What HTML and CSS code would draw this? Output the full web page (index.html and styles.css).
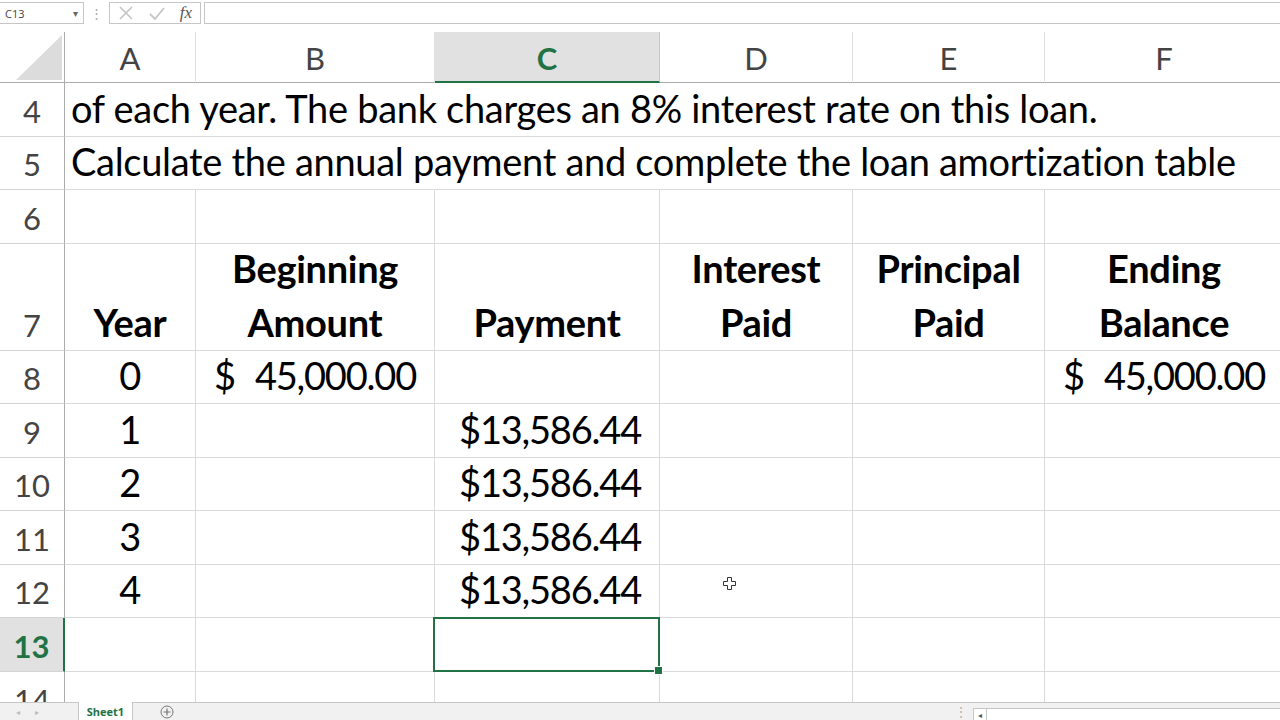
FILE: index.html
```html
<!DOCTYPE html>
<html>
<head>
<meta charset="utf-8">
<link rel="stylesheet" href="styles.css">
</head>
<body>
<div class="app">
  <div class="fbar">
    <div class="namebox"><span class="nb-text">C13</span><span class="nb-arrow">▾</span></div>
    <div class="fdots">⋮</div>
    <div class="fxbox">
      <svg class="ico" width="16" height="16" viewBox="0 0 16 16"><path d="M2 2 L14 14 M14 2 L2 14" stroke="#c4c4c4" stroke-width="1.6" fill="none"/></svg>
      <svg class="ico" width="18" height="16" viewBox="0 0 18 16"><path d="M2 9 L7 14 L16 3" stroke="#c4c4c4" stroke-width="1.8" fill="none"/></svg>
      <span class="fx">fx</span>
    </div>
    <div class="finput"></div>
  </div>

  <div class="sheet">
    <div class="grid">
      <div class="corner"><svg width="46" height="45" viewBox="0 0 46 45"><polygon points="46,0 46,45 0,45" fill="#dcdcdc"/></svg></div>
      <div class="ch">A</div>
      <div class="ch">B</div>
      <div class="ch ch-sel">C</div>
      <div class="ch">D</div>
      <div class="ch">E</div>
      <div class="ch">F</div>

      <div class="rh">4</div>
      <div class="c span">of each year. The bank charges an 8% interest rate on this loan.</div>

      <div class="rh">5</div>
      <div class="c span">Calculate the annual payment and complete the loan amortization table</div>

      <div class="rh">6</div>
      <div class="c"></div><div class="c"></div><div class="c"></div><div class="c"></div><div class="c"></div><div class="c"></div>

      <div class="rh">7</div>
      <div class="c hd">Year</div>
      <div class="c hd">Beginning<br>Amount</div>
      <div class="c hd">Payment</div>
      <div class="c hd">Interest<br>Paid</div>
      <div class="c hd">Principal<br>Paid</div>
      <div class="c hd">Ending<br>Balance</div>

      <div class="rh">8</div>
      <div class="c ctr">0</div>
      <div class="c acct"><span>$</span><span class="amt">45,000.00</span></div>
      <div class="c"></div><div class="c"></div><div class="c"></div>
      <div class="c acct"><span>$</span><span class="amt">45,000.00</span></div>

      <div class="rh">9</div>
      <div class="c ctr">1</div>
      <div class="c"></div>
      <div class="c num">$13,586.44</div>
      <div class="c"></div><div class="c"></div><div class="c"></div>

      <div class="rh">10</div>
      <div class="c ctr">2</div>
      <div class="c"></div>
      <div class="c num">$13,586.44</div>
      <div class="c"></div><div class="c"></div><div class="c"></div>

      <div class="rh">11</div>
      <div class="c ctr">3</div>
      <div class="c"></div>
      <div class="c num">$13,586.44</div>
      <div class="c"></div><div class="c"></div><div class="c"></div>

      <div class="rh">12</div>
      <div class="c ctr">4</div>
      <div class="c"></div>
      <div class="c num">$13,586.44</div>
      <div class="c cursor-cell"><svg class="cursor" width="13" height="13" viewBox="0 0 13 13"><path d="M4.5 0.5 H8.5 V4.5 H12.5 V8.5 H8.5 V12.5 H4.5 V8.5 H0.5 V4.5 H4.5 Z" fill="#fff" stroke="#333" stroke-width="1"/></svg></div>
      <div class="c"></div><div class="c"></div>

      <div class="rh rh-sel">13</div>
      <div class="c"></div>
      <div class="c"></div>
      <div class="c sel"></div>
      <div class="c"></div><div class="c"></div><div class="c"></div>

      <div class="rh">14</div>
      <div class="c"></div><div class="c"></div><div class="c"></div><div class="c"></div><div class="c"></div><div class="c"></div>
    </div>
  </div>

  <div class="tabs">
    <div class="tnav"><span>◂</span><span>▸</span></div>
    <div class="tab">Sheet1</div>
    <div class="addsheet"><svg width="14" height="14" viewBox="0 0 14 14"><circle cx="7" cy="7" r="6" fill="none" stroke="#777" stroke-width="1"/><path d="M7 3.5 V10.5 M3.5 7 H10.5" stroke="#777" stroke-width="1.2"/></svg></div>
    <div class="tspace"></div>
    <div class="tdots">⋮</div>
    <div class="hscroll"><div class="harrow">◂</div></div>
  </div>
</div>
</body>
</html>
```

FILE: styles.css
```css
* { box-sizing: border-box; }
html, body { margin: 0; padding: 0; background: #fff; }
body { font-family: "Lato", "Liberation Sans", sans-serif; overflow: hidden; }

.app { width: 1280px; height: 720px; display: flex; flex-direction: column; overflow: hidden; }

/* formula bar */
.fbar { height: 32px; flex: none; display: flex; align-items: flex-start; padding-top: 2px; font-family: "Open Sans", "Liberation Sans", sans-serif; }
.namebox { width: 84px; height: 22px; border: 1px solid #c6c6c6; border-left: none; display: flex; align-items: center; justify-content: space-between; padding: 0 5px 0 5px; font-size: 11px; color: #444; }
.nb-arrow { font-size: 10px; color: #666; }
.fdots { width: 25px; height: 22px; display: flex; align-items: center; justify-content: center; color: #aaa; font-size: 13px; }
.fxbox { width: 92px; height: 22px; border: 1px solid #c6c6c6; display: flex; align-items: center; justify-content: space-between; padding: 0 8px 0 8px; }
.fx { font-family: "Liberation Serif", serif; font-style: italic; font-size: 17px; color: #555; line-height: 18px; }
.finput { flex: 1; height: 22px; margin-left: 3px; border: 1px solid #c6c6c6; border-right: none; }

/* sheet */
.sheet { flex: 1; overflow: hidden; }
.grid { display: grid; width: 1284px;
  grid-template-columns: 65px 131px 239px 225px 193px 192px 239px;
  grid-template-rows: 51px 54px 53px 54px 107px 53px 54px 53px 54px 53px 54px 54px; }

.corner { border-right: 1px solid #ababab; border-bottom: 1px solid #ababab; display: flex; align-items: flex-end; justify-content: flex-end; padding: 0 2px 2px 0; }
.ch { border-right: 1px solid #e1e1e1; border-bottom: 1px solid #ababab; display: flex; justify-content: center; align-items: flex-end; font-size: 31px; line-height: 40px; padding-bottom: 4px; color: #444; }
.ch-sel { background: #e1e1e1; color: #217346; font-weight: 700; border-bottom: 2px solid #217346; padding-bottom: 3px; border-right-color: #c6c6c6; }

.rh { border-right: 1px solid #ababab; border-bottom: 1px solid #d4d4d4; display: flex; justify-content: center; align-items: flex-end; font-size: 31px; line-height: 50px; color: #444; }
.rh-sel { background: #e1e1e1; color: #217346; font-weight: 700; border-right: 2px solid #217346; }

.c { border-right: 1px solid #dadada; border-bottom: 1px solid #dadada; display: flex; align-items: flex-end; font-size: 38px; letter-spacing: -0.3px; line-height: 54px; padding: 0 6px 1px; color: #000; white-space: nowrap; }
.span { grid-column: 2 / -1; }
.hd { font-weight: 700; justify-content: center; text-align: center; }
.ctr { justify-content: center; }
.num { justify-content: flex-end; padding-right: 18px; letter-spacing: -1.2px; }
.acct { justify-content: space-between; padding-left: 18px; padding-right: 18px; }
.amt { letter-spacing: -1.2px; }

.sel { position: relative; }
.sel::after { content: ""; position: absolute; left: -2px; top: -1px; right: -1px; bottom: -1px; border: 2px solid #217346; }
.sel::before { content: ""; position: absolute; right: -4px; bottom: -4px; width: 7px; height: 7px; background: #217346; border: 1px solid #fff; z-index: 2; }

.cursor-cell { position: relative; }
.cursor { position: absolute; left: 63px; top: 12px; }

/* tabs */
.tabs { height: 18px; flex: none; border-top: 1px solid #c6c6c6; background: #f1f1f1; display: flex; align-items: stretch; font-family: "Open Sans", "Liberation Sans", sans-serif; font-size: 11px; }
.tnav { width: 78px; display: flex; align-items: center; padding-left: 16px; gap: 15px; color: #bbb; font-size: 8px; }
.tab { width: 55px; background: #fff; border-left: 1px solid #c6c6c6; border-right: 1px solid #c6c6c6; margin-top: -1px; display: flex; align-items: center; justify-content: center; color: #217346; font-weight: 700; font-size: 11px; }
.addsheet { width: 68px; display: flex; align-items: center; justify-content: center; }
.tspace { flex: 1; }
.tdots { width: 24px; display: flex; align-items: center; justify-content: center; color: #aaa; font-size: 12px; }
.hscroll { width: 307px; margin-top: 5px; background: #fff; border: 1px solid #c6c6c6; border-right: none; border-bottom: none; display: flex; }
.harrow { width: 13px; border-right: 1px solid #c6c6c6; font-size: 8px; color: #555; display: flex; align-items: center; justify-content: center; }
```
